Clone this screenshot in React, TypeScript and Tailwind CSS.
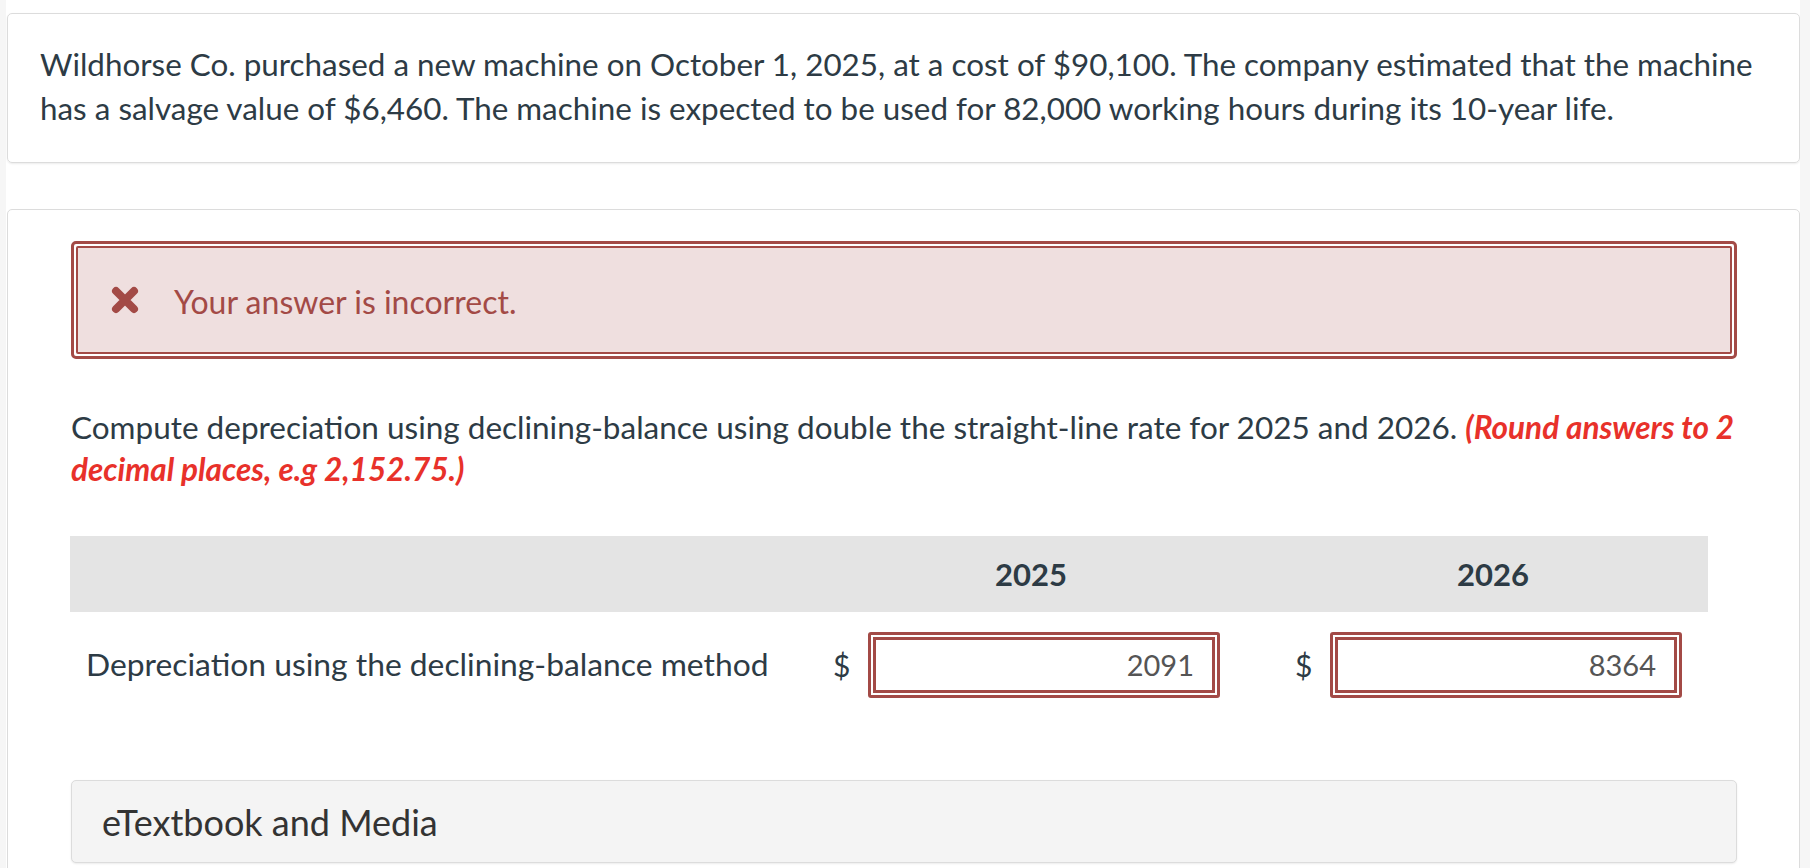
import React from "react";

function CrossIcon() {
  return (
    <svg width="28" height="28" viewBox="0 0 28 28" className="shrink-0">
      <path d="M5 5 L23 23 M23 5 L5 23" stroke="#a34a46" strokeWidth="8" strokeLinecap="round" />
    </svg>
  );
}

function AnswerInput({ value }: { value: string }) {
  return (
    <div className="flex items-center w-[402px] pl-[3px]">
      <span className="w-[35px] text-[30px] leading-none text-[#2d3b45]">$</span>
      <div className="w-[352px] h-[66px] border-[3px] border-[#a34a46] rounded-[3px] bg-white p-[2px]">
        <div className="h-full border-[3px] border-[#a34a46] bg-white flex items-center justify-end pr-[18px] text-[29px] text-[#555]">
          {value}
        </div>
      </div>
    </div>
  );
}

export default function App() {
  return (
    <div className="min-h-screen bg-[#f6f6f6] flex font-['Lato','Noto_Sans',sans-serif]">
      <div className="ml-[6px] w-[1794px] bg-white pl-[1px] overflow-hidden h-[868px]">
        <div className="mt-[13px] w-[1793px] border border-[#dcdcdc] rounded-[5px] shadow-[0_1px_2px_rgba(0,0,0,0.08)] pt-[29px] pb-[32px] pl-[32px] pr-[30px]">
          <p className="text-[31.4px] leading-[43.5px] text-[#2d3b45]">
            Wildhorse Co. purchased a new machine on October 1, 2025, at a cost of $90,100. The company estimated that the machine has a salvage value of $6,460. The machine is expected to be used for 82,000 working hours during its 10-year life.
          </p>
        </div>

        <div className="mt-[46px] w-[1793px] border border-[#dcdcdc] rounded-[5px] pt-[31px] pl-[63px] pr-[62px] h-[700px]">
          <div className="border-[3px] border-[#a34a46] rounded-[5px] bg-white p-[2px]">
            <div className="h-[108px] border-2 border-[#a34a46] rounded-[2px] bg-[#efdfdf] flex items-center pl-[33px]">
              <CrossIcon />
              <span className="ml-[35px] text-[32px] text-[#a34a46] pt-[3px]">Your answer is incorrect.</span>
            </div>
          </div>

          <p className="mt-[47px] text-[31.5px] leading-[42px] text-[#2d3b45]">
            Compute depreciation using declining-balance using double the straight-line rate for 2025 and 2026.{" "}
            <span className="font-bold italic text-[#e8312a]">(Round answers to 2 decimal places, e.g 2,152.75.)</span>
          </p>

          <div className="mt-[46px] w-[1638px] -ml-px">
            <div className="h-[76px] bg-[#e4e4e4] flex items-center text-[31px] font-bold text-[#2d3b45]">
              <div className="w-[760px]" />
              <div className="w-[402px] text-center">2025</div>
              <div className="w-[60px]" />
              <div className="w-[402px] text-center">2026</div>
            </div>
            <div className="mt-[20px] flex items-center">
              <div className="w-[760px] pl-[16px] text-[31.8px] text-[#2d3b45]">
                Depreciation using the declining-balance method
              </div>
              <AnswerInput value="2091" />
              <div className="w-[60px]" />
              <AnswerInput value="8364" />
            </div>
          </div>

          <div className="mt-[82px] h-[83px] border border-[#dcdcdc] rounded-[5px] bg-[#f4f4f4] shadow-[0_1px_2px_rgba(0,0,0,0.08)] flex items-center pl-[30px] text-[36px] text-[#333]">
            eTextbook and Media
          </div>
        </div>
      </div>
    </div>
  );
}
